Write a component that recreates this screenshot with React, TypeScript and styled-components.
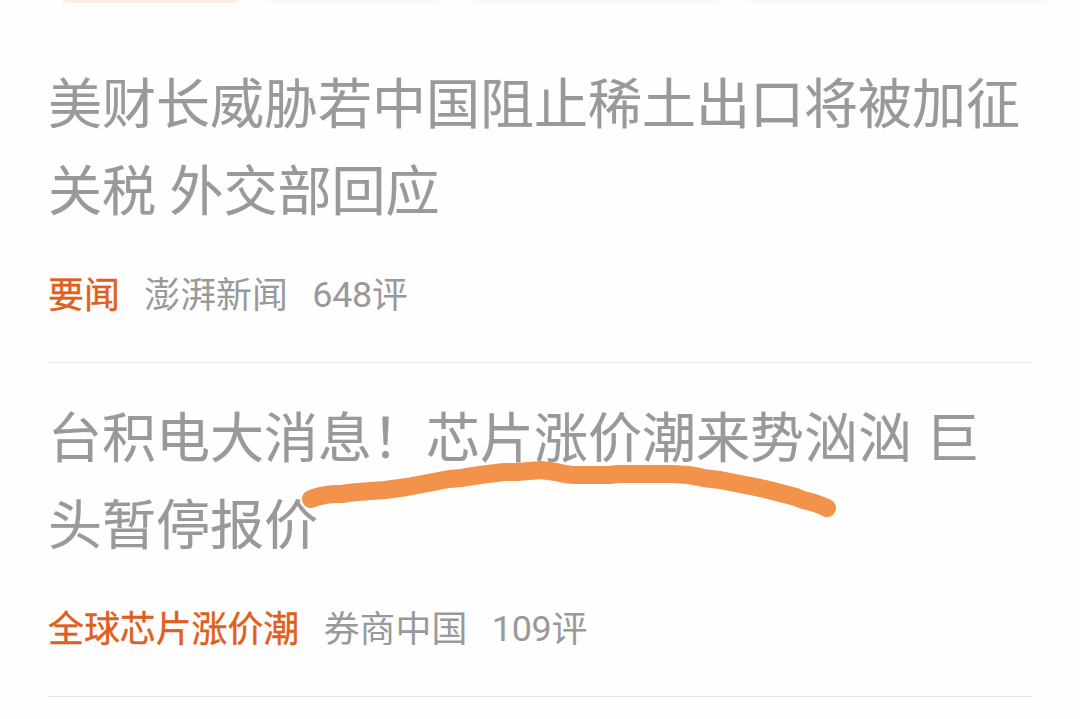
import React from "react";
import styled, { createGlobalStyle } from "styled-components";

const GlobalStyle = createGlobalStyle`
  body { margin: 0; background: #fefefe; overflow: hidden; }
  * { box-sizing: border-box; }
`;
const Page = styled.main`
  width: 1080px;
  height: 719px;
  overflow: hidden;
  font-family: Roboto, "Noto Sans CJK SC", sans-serif;
  color: #999;
`;
const Chips = styled.div`
  display: flex;
  height: 3px;
  padding-left: 60px;
  gap: 24px;
`;
const Chip = styled.div<{ $w: number; $active?: boolean }>`
  width: ${(p) => p.$w}px;
  height: 24px;
  margin-top: -21px;
  border-radius: 0 0 8px 8px;
  background: ${(p) => (p.$active ? "#fdede4" : "#f8f8f8")};
`;
const Article = styled.article<{ $first?: boolean }>`
  margin: 0 48px;
  height: ${(p) => (p.$first ? 360 : 334)}px;
  padding-top: ${(p) => (p.$first ? 59 : 33)}px;
  border-bottom: 1px solid #e6e6e6;
`;
const Title = styled.h2`
  margin: 0;
  font-size: 54px;
  line-height: 87px;
  font-weight: 400;
  -webkit-text-stroke: 0.2px #999;
  white-space: nowrap;
`;
const Line = styled.span`
  display: block;
`;
const Meta = styled.div`
  display: flex;
  gap: 24.5px;
  margin-top: 36px;
  font-size: 35.9px;
  line-height: 48px;
  white-space: nowrap;
`;
const Tag = styled.span`
  color: #df5f1e;
  -webkit-text-stroke: 0.4px #df5f1e;
`;
const Count = styled.span`
  letter-spacing: -0.3px;
`;
const Digits = styled.span`
  position: relative;
  top: -1px;
`;
const Headline = styled.div`
  position: relative;
`;
const Marker = styled.svg`
  position: absolute;
  left: 252px;
  top: 59px;
`;
const NextRow = styled.div`
  display: flex;
  gap: 44px;
  margin-top: 19px;
  padding-left: 50px;
`;
const NextCell = styled.div<{ $w: number }>`
  width: ${(p) => p.$w}px;
  height: 3px;
  background: #fcfcfc;
`;

export default function App() {
  return (
    <Page>
      <GlobalStyle />
      <Chips><Chip $w={181} $active /><Chip $w={179} /><Chip $w={254} /><Chip $w={304} /></Chips>
      <Article $first>
        <Title><Line>美财长威胁若中国阻止稀土出口将被加征</Line><Line>关税 外交部回应</Line></Title>
        <Meta><Tag>要闻</Tag><span>澎湃新闻</span><Count><Digits>648</Digits>评</Count></Meta>
      </Article>
      <Article>
        <Headline>
          <Title><Line>台积电大消息！芯片涨价潮来势汹汹 巨</Line><Line>头暂停报价</Line></Title>
          <Marker width="544" height="70" viewBox="300 455 544 70" fill="none">
            <path d="M311 499Q320 495 335 494L342 494L348 493L358 492L385 490L407 487Q428 483 449 479L461 478L480 475L504 472L517 472L541 470L556 472Q568 475 575 475L610 475L618 474L673 474L688 475L700 477L703 478L720 480L765 489L796 497L803 500Q814 502 827 508" stroke="#f3924a" strokeWidth="18" strokeLinecap="round" strokeLinejoin="round" />
          </Marker>
        </Headline>
        <Meta><Tag>全球芯片涨价潮</Tag><span>券商中国</span><Count><Digits>109</Digits>评</Count></Meta>
      </Article>
      <NextRow><NextCell $w={390} /><NextCell $w={380} /><NextCell $w={160} /></NextRow>
    </Page>
  );
}
